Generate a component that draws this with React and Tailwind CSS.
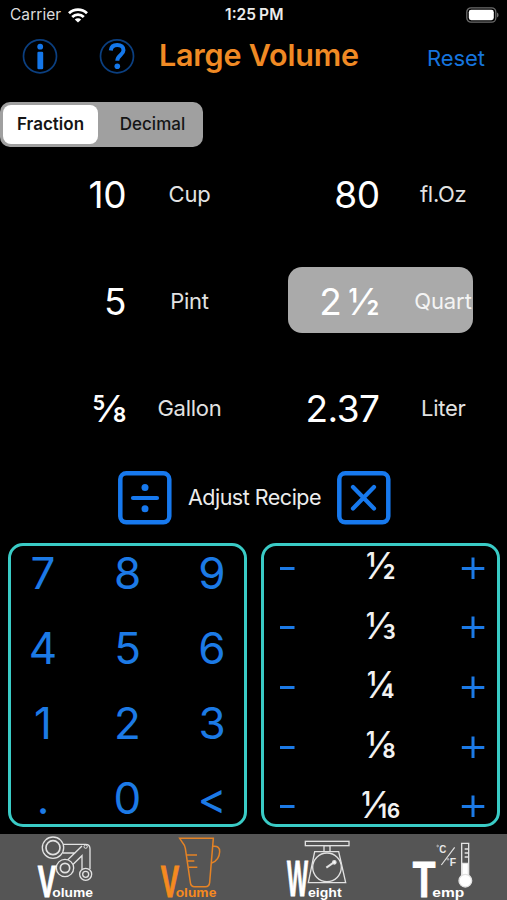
const KEYS = ['7', '8', '9', '4', '5', '6', '1', '2', '3', '.', '0', '<'];
const FRACTIONS = ['1/2', '1/3', '1/4', '1/8', '1/16'];

function StatusBar() {
  return (
    <div className="flex h-[30px] items-center justify-between pr-[8px] pl-[10px] text-[15.5px] leading-none">
      <div className="flex w-[120px] items-center gap-[7px] text-[#dcdcdc]">
        <span className="tracking-[0.05px]">Carrier</span>
        <svg width="20" height="15" viewBox="0 0 20 15" fill="none" stroke="#fff" strokeWidth="2.8">
          <path d="M1 5.2a13 13 0 0 1 18 0" />
          <path d="M4.200 8.900a8.400 8.400 0 0 1 11.600 0" />
          <path d="M10 14.500 6.800 11.600a4.600 4.600 0 0 1 6.400 0Z" fill="#fff" stroke="none" />
        </svg>
      </div>
      <span className="text-[15.5px] font-semibold text-[#ececec]">1:25<span className="ml-[3px] tracking-[0.3px]">PM</span></span>
      <div className="flex w-[120px] justify-end">
        <svg width="33" height="16" viewBox="0 0 33 16">
          <rect x="0.8" y="0.8" width="29" height="14.4" rx="4.2" fill="none" stroke="#6b6b6b" strokeWidth="1.3" />
          <rect x="2.8" y="2.8" width="25" height="10.4" rx="2.4" fill="#fff" />
          <path d="M31 5.6v4.8q1.6-.7 1.6-2.4T31 5.6Z" fill="#6b6b6b" />
        </svg>
      </div>
    </div>
  );
}

function Header() {
  return (
    <div className="flex h-[72px] items-start pl-[22px]">
      <svg className="mt-[8px] shrink-0" width="36" height="36" viewBox="0 0 36 36">
        <circle cx="18" cy="18.3" r="16.5" fill="none" stroke="#0b3f80" strokeWidth="1.7" />
        <circle cx="18.2" cy="8.700" r="2.900" fill="#1477ea" />
        <rect x="15.400" y="13.800" width="5.800" height="17.500" rx="1.200" fill="#1477ea" />
      </svg>
      <svg className="mt-[8px] ml-[41px] shrink-0" width="36" height="36" viewBox="0 0 36 36">
        <circle cx="18" cy="18.300" r="16.500" fill="none" stroke="#0b3f80" strokeWidth="1.700" />
        <path d="M11.800 12.500c.3-3.700 2.700-5.600 6.400-5.600 3.900 0 6.300 2.200 6.300 5.300 0 4.800-6.200 4.800-6.200 10.600" fill="none" stroke="#1477ea" strokeWidth="4" />
        <circle cx="18.300" cy="28.200" r="2.800" fill="#1477ea" />
      </svg>
      <h1 className="ml-[24px] w-[200px] pt-[5px] text-[30.5px] leading-[40px] font-semibold tracking-[-0.2px] whitespace-nowrap text-[#f08a24]">Large Volume</h1>
      <button className="ml-[68px] pt-[14px] text-[22px] leading-[28px] tracking-[-0.1px] whitespace-nowrap text-[#1674dd]">Reset</button>
    </div>
  );
}

function Segmented() {
  return (
    <div className="flex h-[45px] w-[203px] rounded-[10px] bg-[#a0a0a0] p-[3px] text-[17px] font-medium text-[#151515]">
      <div className="flex w-[95px] items-center justify-center rounded-[8px] bg-white font-semibold">Fraction</div>
      <div className="flex flex-1 items-center justify-center pl-[7px]">Decimal</div>
    </div>
  );
}

function Value({ value, unit }) {
  return (
    <div className="flex h-[66px] items-center pt-[2px]">
      <span className="w-[127px] text-right text-[37px] leading-none tracking-[-0.5px]">{value}</span>
      <span className="w-[128px] text-center text-[22px] leading-none tracking-[-0.25px] text-[#e2e2e2]">{unit}</span>
    </div>
  );
}

function SelectedValue({ value, unit }) {
  return (
    <div className="ml-[35px] flex h-[66px] w-[185px] items-center rounded-[14px] bg-[#aaaaaa] pt-[2px]">
      <span className="w-[91px] shrink-0 text-right text-[37px] leading-none [word-spacing:-3px] tracking-[-0.5px] whitespace-nowrap">{value}</span>
      <span className="w-[128px] shrink-0 text-center text-[22px] leading-none tracking-[-0.1px] text-[#f4f4f4]">{unit}</span>
    </div>
  );
}

function AdjustRow() {
  return (
    <div className="mt-[31px] flex h-[53px] items-center pl-[118px]">
      <svg width="54" height="54" viewBox="0 0 54 54" fill="none" stroke="#1779ee" strokeLinecap="round">
        <rect x="2.300" y="2.300" width="49" height="49" rx="6" strokeWidth="4.500" />
        <path d="M15 27h24" strokeWidth="4.200" />
        <circle cx="27" cy="16.500" r="3.500" fill="#1779ee" stroke="none" />
        <circle cx="27" cy="37.700" r="3.500" fill="#1779ee" stroke="none" />
      </svg>
      <span className="w-[165px] pt-[1px] text-center text-[21.5px] leading-none tracking-[-0.5px] whitespace-nowrap text-[#ececec]">Adjust Recipe</span>
      <svg width="54" height="54" viewBox="0 0 54 54" fill="none" stroke="#1779ee" strokeLinecap="round">
        <rect x="2.300" y="2.300" width="49" height="49" rx="6" strokeWidth="4.500" />
        <path d="M16 16 37 37.500M37 16 16 37.500" strokeWidth="4.200" />
      </svg>
    </div>
  );
}

function Keypad() {
  return (
    <div className="grid h-[284px] w-[239px] grid-cols-[84.500px_84.500px_84.500px] grid-rows-[75px_75px_75px_75px] justify-center rounded-[15px] border-[3px] border-[#3acbc6] [align-content:center]">
      {KEYS.map((k) => (
        <button key={k} className="flex items-center justify-center text-[44px] leading-none font-[370] text-[#1c7ae6]">{k}</button>
      ))}
    </div>
  );
}

function FractionPad() {
  return (
    <div className="flex h-[284px] w-[239px] flex-col rounded-[15px] border-[3px] border-[#3acbc6] pr-[12px] pl-[15px]">
      {FRACTIONS.map((f) => (
        <div key={f} className="flex h-[59.600px] shrink-0 items-center justify-between first:-mt-[9px]">
          <svg width="16" height="24" viewBox="0 0 16 24" stroke="#1c7ae6" strokeWidth="3">
            <path d="M1 13.500h14.500" />
          </svg>
          <span className="pb-[2px] pl-[5px] text-[37px] leading-none tracking-[-0.8px] text-[#f2f2f2] diagonal-fractions">{f}</span>
          <svg width="24" height="24" viewBox="0 0 24 24" stroke="#1c7ae6" strokeWidth="3">
            <path d="M.8 13.500h22.500M12 2.500v21.500" />
          </svg>
        </div>
      ))}
    </div>
  );
}

function TabLabel({ big, bigX, bigY, bigSize, bigW, rest, restX, restW, fill }) {
  return (
    <g fill={fill} stroke="none" fontFamily="Liberation Sans, Arial, sans-serif" fontWeight="700">
      <text x={bigX} y={bigY} fontSize={bigSize} textLength={bigW} lengthAdjust="spacingAndGlyphs" stroke={fill} strokeWidth="3">{big}</text>
      <text x={restX} y="194" fontSize="41" textLength={restW} lengthAdjust="spacingAndGlyphs">{rest}</text>
    </g>
  );
}

function TabBar() {
  return (
    <nav className="flex h-[66px] shrink-0 bg-[#555555] pl-[20px]">
      <svg width="100" height="66" viewBox="0 6 300 198" fill="none" stroke="#e2e2e2" strokeWidth="4">
        <circle cx="99" cy="47" r="32" />
        <circle cx="99" cy="47" r="21" strokeWidth="5" />
        <path d="M129 37h68q13 0 13 14v60M129 63h37M142 85l44-43M158 98l28-27v40" />
        <circle cx="197" cy="44" r="5" strokeWidth="3" />
        <circle cx="135" cy="108" r="26" fill="#555" />
        <circle cx="135" cy="108" r="14" strokeWidth="5" />
        <circle cx="197" cy="127" r="18" fill="#555" />
        <circle cx="197" cy="127" r="9" />
        <TabLabel big="V" bigX={53} bigY={194} bigSize={134} bigW={55} rest="olume" restX={97} restW={122} fill="#fff" />
      </svg>
      <svg className="ml-[25px]" width="100" height="66" viewBox="0 6 300 198" fill="none" stroke="#e58325" strokeWidth="4.500">
        <path d="M104 19h101l-11 132q-1 13-13 13h-32q-12 0-13-13L121 49q-1-8-7-15Z" />
        <path d="M204 43q21-2 20 16-1 25-24 34" />
        <path d="M125 69h31M128 87h20M130 106h27" />
        <TabLabel big="V" bigX={47} bigY={195} bigSize={134} bigW={55} rest="olume" restX={92} restW={122} fill="#f58a1f" />
      </svg>
      <svg className="ml-[30px]" width="100" height="66" viewBox="0 6 300 198" fill="none" stroke="#e2e2e2" strokeWidth="4">
        <rect x="91" y="28" width="131" height="13" />
        <path d="M147 41h18v18h-18zM119 59h72l21 93H100z" />
        <circle cx="156" cy="106" r="43" fill="#555" />
        <path d="M154 107l26-18" strokeWidth="6" />
        <circle cx="178" cy="91" r="5" fill="#fff" />
        <TabLabel big="W" bigX={36} bigY={192} bigSize={150} bigW={63} rest="eight" restX={99} restW={101} fill="#fff" />
      </svg>
      <svg className="ml-[25px]" width="100" height="66" viewBox="0 6 300 198" fill="none" stroke="#e2e2e2" strokeWidth="4">
        <path d="M185 140V34h21v106" />
        <path d="M186 94h19v45h-19z" fill="#fff" />
        <circle cx="196" cy="146" r="19" fill="#fff" />
        <path d="M194 51h12M194 63h12M194 75h12" />
        <path d="M124 99l40-53" strokeWidth="3.500" />
        <circle cx="113" cy="42" r="2.500" strokeWidth="2" />
        <circle cx="144" cy="82" r="2.500" strokeWidth="2" />
        <g fill="#e8e8e8" stroke="none" fontFamily="Liberation Sans, Arial, sans-serif" fontWeight="700" fontSize="32">
          <text x="118" y="63" textLength="21" lengthAdjust="spacingAndGlyphs">C</text>
          <text x="149" y="103" textLength="19" lengthAdjust="spacingAndGlyphs">F</text>
        </g>
        <TabLabel big="T" bigX={38} bigY={195} bigSize={152} bigW={68} rest="emp" restX={97} restW={96} fill="#fff" />
      </svg>
    </nav>
  );
}

export default function App() {
  return (
    <div className="flex h-[900px] w-[507px] flex-col overflow-hidden bg-black font-[Inter,sans-serif] text-white">
      <StatusBar />
      <Header />
      <Segmented />
      <div className="mt-[13px] grid grid-cols-[253px_254px] gap-y-[41px]">
        <Value value="10" unit="Cup" />
        <Value value="80" unit="fl.Oz" />
        <Value value="5" unit="Pint" />
        <SelectedValue value="2 ½" unit="Quart" />
        <Value value="⅝" unit="Gallon" />
        <Value value="2.37" unit="Liter" />
      </div>
      <AdjustRow />
      <div className="mt-[19px] mb-[7px] flex gap-[14px] pl-[8px]">
        <Keypad />
        <FractionPad />
      </div>
      <TabBar />
    </div>
  );
}
